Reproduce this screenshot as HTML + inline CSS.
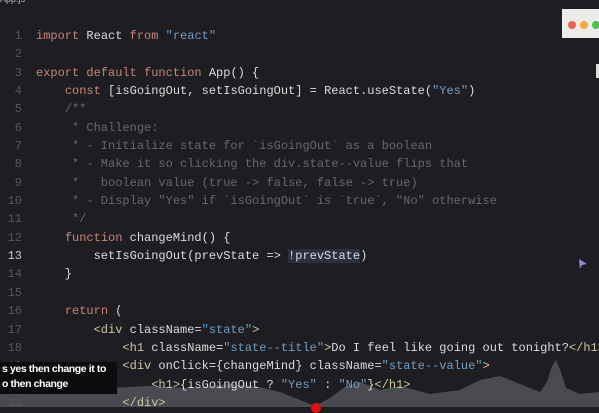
<!DOCTYPE html>
<html><head><meta charset="utf-8"><style>
html,body{margin:0;padding:0;width:599px;height:407px;overflow:hidden;background:#1e1e22;}
.code{position:absolute;left:0;top:27px;font-family:"Liberation Mono",monospace;font-size:12px;line-height:18.35px;color:#dcdcdc;white-space:pre;z-index:2}
.ln{display:inline-block;width:22px;text-align:right;color:#55565c;margin-right:14px;}
.k{color:#c7867a}.s{color:#6f9ec2}.c{color:#67686e}.t{color:#d0c8a0}
.cur .ln{color:#c8c8c8}
.hl{background:#2a3040}
</style></head><body>
<div style="position:absolute;left:0;top:-6px;font:9px 'Liberation Sans',sans-serif;color:#bbb">App.js</div>
<svg style="position:absolute;left:0;top:340px;z-index:1" width="599" height="67"><path d="M0 67 L0 52 L60 50 L110 48 L150 46 L190 48 L230 44 L260 47 L280 52 L300 60 L315 66 L330 58 L345 47 L360 42 L380 50 L400 46 L430 54 L460 50 L480 40 L500 36 L540 52 L547 42 L552 26 L556 20 L561 32 L566 48 L580 54 L599 52 L599 67Z" fill="#4a4b50"/></svg>
<div class="code"><div><span class="ln">1</span><span class="k">import</span> React <span class="k">from</span> <span class="s">"react"</span></div><div><span class="ln">2</span></div><div><span class="ln">3</span><span class="k">export default function</span> App() {</div><div><span class="ln">4</span>    <span class="k">const</span> [isGoingOut, setIsGoingOut] = React.useState(<span class="s">"Yes"</span>)</div><div><span class="ln">5</span>    <span class="c">/**</span></div><div><span class="ln">6</span><span class="c">     * Challenge:</span></div><div><span class="ln">7</span><span class="c">     * - Initialize state for `isGoingOut` as a boolean</span></div><div><span class="ln">8</span><span class="c">     * - Make it so clicking the div.state--value flips that</span></div><div><span class="ln">9</span><span class="c">     *   boolean value (true -&gt; false, false -&gt; true)</span></div><div><span class="ln">10</span><span class="c">     * - Display "Yes" if `isGoingOut` is `true`, "No" otherwise</span></div><div><span class="ln">11</span><span class="c">     */</span></div><div><span class="ln">12</span>    <span class="k">function</span> changeMind() {</div><div class="cur"><span class="ln">13</span>        setIsGoingOut(prevState =&gt; <span class="hl">!prevState</span>)</div><div><span class="ln">14</span>    }</div><div><span class="ln">15</span></div><div><span class="ln">16</span>    <span class="k">return</span> (</div><div><span class="ln">17</span>        <span class="t">&lt;div</span> className=<span class="s">"state"</span><span class="t">&gt;</span></div><div><span class="ln">18</span>            <span class="t">&lt;h1</span> className=<span class="s">"state--title"</span><span class="t">&gt;</span>Do I feel like going out tonight?<span class="t">&lt;/h1&gt;</span></div><div><span class="ln">19</span>            <span class="t">&lt;div</span> onClick={changeMind} className=<span class="s">"state--value"</span><span class="t">&gt;</span></div><div><span class="ln">20</span>                <span class="t">&lt;h1&gt;</span>{isGoingOut ? <span class="s">"Yes"</span> : <span class="s">"No"</span>}<span class="t">&lt;/h1&gt;</span></div><div><span class="ln">21</span>            <span class="t">&lt;/div&gt;</span></div></div>
<div style="position:absolute;left:562px;top:9px;width:37px;height:29px;background:#ebebeb"></div>
<div style="position:absolute;left:568px;top:21px;width:8px;height:8px;border-radius:50%;background:#f0604e"></div>
<div style="position:absolute;left:580px;top:21px;width:8px;height:8px;border-radius:50%;background:#f2a73a"></div>
<div style="position:absolute;left:592px;top:21px;width:8px;height:8px;border-radius:50%;background:#4cc24a"></div>
<div style="position:absolute;left:596px;top:64px;width:3px;height:14px;background:#ddd"></div>
<svg style="position:absolute;left:578px;top:258px" width="10" height="12"><path d="M1 1 L9 6 L4 7 L2 11Z" fill="#8a8fd0"/></svg>
<div style="position:absolute;left:311px;top:403px;width:10px;height:10px;border-radius:50%;background:#e01010;z-index:3"></div>
<div style="position:absolute;left:0;top:362px;width:115px;height:32px;background:#0c0c0c;color:#fff;font:bold 10.5px/15px 'Liberation Sans',sans-serif;padding-left:2px;white-space:nowrap;letter-spacing:-0.4px;z-index:3">s yes then change it to<br>o then change</div>
</body></html>
